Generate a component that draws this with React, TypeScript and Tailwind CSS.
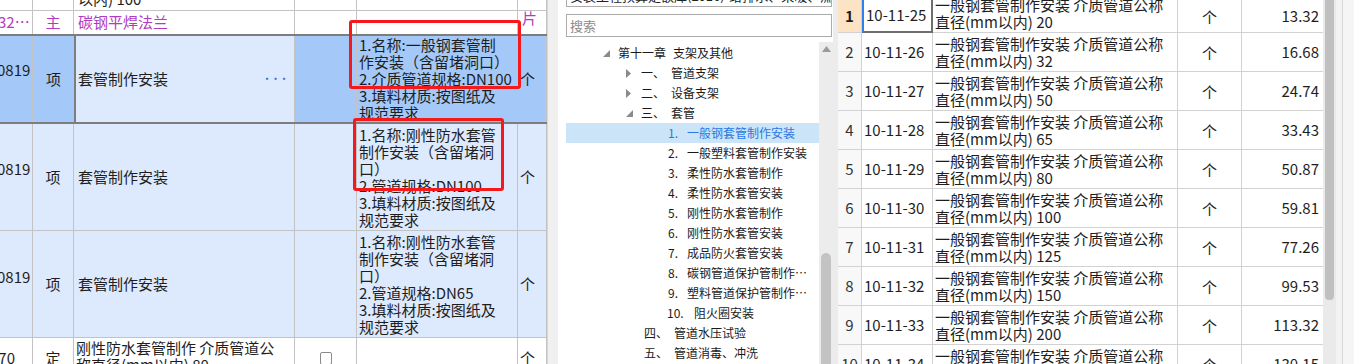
const cjk = "font-['Noto_Sans_CJK_SC',sans-serif]";

const c1 = "w-[33px] shrink-0 border-r border-[#c3c3c3] overflow-hidden";
const c2 = "w-[41px] shrink-0 border-r border-[#c3c3c3] flex items-center justify-center";
const c3 = "w-[221px] shrink-0 border-r border-[#c3c3c3] flex items-center pl-[4px] overflow-hidden";
const c4 = "w-[62px] shrink-0 border-r border-[#c3c3c3] flex items-center justify-center";
const c5 = "w-[161px] shrink-0 border-r border-[#c3c3c3] pl-[2px] pt-[2px] overflow-hidden";
const c6 = "w-[29px] shrink-0 border-r border-[#c3c3c3] flex items-center pl-[2px]";

function Lines({ items }: { items: string[] }) {
  return (
    <div className="leading-[17px] whitespace-nowrap">
      {items.map((t, i) => (
        <div key={i}>{t}</div>
      ))}
    </div>
  );
}

function LeftTable() {
  return (
    <div className="relative w-[547px] h-[364px] overflow-hidden bg-white text-[15px] text-[#1e1e1e]">
      {/* partial top row */}
      <div className="flex h-[11px] border-b border-[#c3c3c3]">
        <div className={c1} />
        <div className="w-[41px] shrink-0 border-r border-[#c3c3c3]" />
        <div className="w-[221px] shrink-0 border-r border-[#c3c3c3] overflow-hidden pl-[4px]">
          <div className="-mt-[10px] leading-[17px]">以内) 100</div>
        </div>
        <div className="w-[62px] shrink-0 border-r border-[#c3c3c3]" />
        <div className="w-[161px] shrink-0 border-r border-[#c3c3c3]" />
        <div className="w-[29px] shrink-0 border-r border-[#c3c3c3]" />
      </div>

      {/* 主材 row */}
      <div className="flex h-[23px] text-[#b03cbf]">
        <div className={c1 + " flex items-center"}>
          <span className="-ml-[2px] whitespace-nowrap">32…</span>
        </div>
        <div className={c2}>主</div>
        <div className={c3}>碳钢平焊法兰</div>
        <div className={c4} />
        <div className={c5} />
        <div className={c6 + " pl-[4px] !items-start"}>
          <span className="leading-[17px] mt-[-2px]">片</span>
        </div>
      </div>

      {/* selected row */}
      <div className="flex h-[90px] border-y-2 border-[#7d7d7d] bg-[#a4c9f8]">
        <div className={c1 + " flex items-center"}>
          <span className="-ml-[3px] -translate-y-[9px]">0819</span>
        </div>
        <div className="w-[41px] shrink-0 flex items-center justify-center">项</div>
        <div className="w-[221px] shrink-0 border-l-2 border-r border-l-[#7d7d7d] border-r-[#c3c3c3] bg-[#dde9fc] flex items-center justify-between pl-[2px] pr-[6px]">
          <span>套管制作安装</span>
          <span className="text-[#2f6fd0] text-[9px] tracking-[-0.5px] font-bold">···</span>
        </div>
        <div className={c4} />
        <div className={c5 + " !pt-0"}>
          <Lines items={["1.名称:一般钢套管制", "作安装（含留堵洞口）", "2.介质管道规格:DN100", "3.填料材质:按图纸及", "规范要求"]} />
        </div>
        <div className={c6}>个</div>
      </div>

      {/* row 4 */}
      <div className="flex h-[107px] border-b border-[#c3c3c3] bg-[#dde9fc]">
        <div className={c1 + " flex items-center"}>
          <span className="-ml-[3px] -translate-y-[8px]">0819</span>
        </div>
        <div className={c2}>项</div>
        <div className={c3}>套管制作安装</div>
        <div className={c4} />
        <div className={c5}>
          <Lines items={["1.名称:刚性防水套管", "制作安装（含留堵洞", "口）", "2.管道规格:DN100", "3.填料材质:按图纸及", "规范要求"]} />
        </div>
        <div className={c6}>个</div>
      </div>

      {/* row 5 */}
      <div className="flex h-[107px] border-b border-[#c3c3c3] bg-[#dde9fc]">
        <div className={c1 + " flex items-center"}>
          <span className="-ml-[3px] -translate-y-[7px]">0819</span>
        </div>
        <div className={c2}>项</div>
        <div className={c3}>套管制作安装</div>
        <div className={c4} />
        <div className={c5}>
          <Lines items={["1.名称:刚性防水套管", "制作安装（含留堵洞", "口）", "2.管道规格:DN65", "3.填料材质:按图纸及", "规范要求"]} />
        </div>
        <div className={c6}>个</div>
      </div>

      {/* row 6 */}
      <div className="flex h-[40px] bg-white">
        <div className={c1 + " flex items-center"}>
          <span className="-ml-[10px]">170</span>
        </div>
        <div className={c2}>定</div>
        <div className="w-[221px] shrink-0 border-r border-[#c3c3c3] pl-[2px] pt-[1px] overflow-hidden">
          <Lines items={["刚性防水套管制作 介质管道公", "称直径(mm以内) 80"]} />
        </div>
        <div className={c4 + " !items-start pt-[14px]"}>
          <div className="w-[12px] h-[13px] rounded-[2px] border border-[#8a8a8a] bg-white" />
        </div>
        <div className={c5} />
        <div className={c6 + " !items-start pt-[9px]"}>个</div>
      </div>

      {/* red highlight boxes */}
      <div className="absolute left-[349px] top-[20px] w-[172px] h-[69px] border-[3px] border-[#f5191c] rounded-[3px]" />
      <div className="absolute left-[353px] top-[118px] w-[151px] h-[73px] border-[3px] border-[#f5191c] rounded-[3px]" />
    </div>
  );
}

function TriDown() {
  return (
    <svg width="7" height="7" viewBox="0 0 7 7">
      <polygon points="7,0 7,7 0,7" fill="#8a8a8a" />
    </svg>
  );
}

function TriRight() {
  return (
    <svg width="5" height="9" viewBox="0 0 5 9">
      <polygon points="0,0 5,4.5 0,9" fill="#8a8a8a" />
    </svg>
  );
}

type Node = { indent: number; tri?: "down" | "right"; pre: string; preW: number; label: string; sel?: boolean };

const nodes: Node[] = [
  { indent: 34, tri: "down", pre: "第十一章", preW: 55, label: "支架及其他" },
  { indent: 57, tri: "right", pre: "一、", preW: 30, label: "管道支架" },
  { indent: 57, tri: "right", pre: "二、", preW: 30, label: "设备支架" },
  { indent: 57, tri: "down", pre: "三、", preW: 30, label: "套管" },
  { indent: 102, pre: "1.", preW: 19, label: "一般钢套管制作安装", sel: true },
  { indent: 102, pre: "2.", preW: 19, label: "一般塑料套管制作安装" },
  { indent: 102, pre: "3.", preW: 19, label: "柔性防水套管制作" },
  { indent: 102, pre: "4.", preW: 19, label: "柔性防水套管安装" },
  { indent: 102, pre: "5.", preW: 19, label: "刚性防水套管制作" },
  { indent: 102, pre: "6.", preW: 19, label: "刚性防水套管安装" },
  { indent: 102, pre: "7.", preW: 19, label: "成品防火套管安装" },
  { indent: 102, pre: "8.", preW: 19, label: "碳钢管道保护管制作…" },
  { indent: 102, pre: "9.", preW: 19, label: "塑料管道保护管制作…" },
  { indent: 101, pre: "10.", preW: 27, label: "阻火圈安装" },
  { indent: 78, pre: "四、", preW: 30, label: "管道水压试验" },
  { indent: 78, pre: "五、", preW: 30, label: "管道消毒、冲洗" },
];

function TreePanel() {
  return (
    <div className="w-[275px] h-[364px] bg-white flex flex-col pl-[8px] overflow-hidden text-[12px]">
      <div className="h-[7px] overflow-hidden border border-t-0 border-[#ababab] mr-[1px]">
        <div className="-mt-[12px] pl-[3px] leading-[16px] text-[13px] whitespace-nowrap text-[#222]">
          安装工程预算定额库(2016)-给排水、采暖、燃气工程
        </div>
      </div>
      <div className="mt-[7px] h-[23px] border border-[#ababab] mr-[1px] flex items-center pl-[3px] text-[13px] text-[#8c8c8c]">
        搜索
      </div>
      <div className="mt-[5px] flex flex-1 min-h-0">
        <div className="w-[253px] pt-[1px]">
          {nodes.map((n, i) => (
            <div
              key={i}
              className={
                "h-[20px] flex items-center whitespace-nowrap " +
                (n.sel ? "bg-[#cce4f8] text-[#2a78e0]" : "text-[#1a1a1a]")
              }
            >
              <div className="shrink-0" style={{ width: n.tri ? n.indent + 3 : n.indent }} />
              {n.tri && (
                <div className="w-[15px] shrink-0 flex items-center">
                  {n.tri === "down" ? <TriDown /> : <TriRight />}
                </div>
              )}
              <span className="shrink-0" style={{ width: n.preW }}>
                {n.pre}
              </span>
              <span>{n.label}</span>
            </div>
          ))}
        </div>
        <div className="w-[14px] bg-[#ececec] flex flex-col items-center">
          <svg width="9" height="6" viewBox="0 0 9 6" className="mt-[4px]">
            <polygon points="0,6 4.5,0 9,6" fill="#9a9a9a" />
          </svg>
          <div className="mt-[201px] w-[10px] flex-1 rounded-t-[5px] bg-[#c3c3c3]" />
        </div>
      </div>
    </div>
  );
}

const rows = [
  ["10-11-25", "20", "13.32"],
  ["10-11-26", "32", "16.68"],
  ["10-11-27", "50", "24.74"],
  ["10-11-28", "65", "33.43"],
  ["10-11-29", "80", "50.87"],
  ["10-11-30", "100", "59.81"],
  ["10-11-31", "125", "77.26"],
  ["10-11-32", "150", "99.53"],
  ["10-11-33", "200", "113.32"],
  ["10-11-34", "250", "130.15"],
];

function QuotaTable() {
  return (
    <div className="flex h-[364px] overflow-hidden">
      <div className="w-[485px] bg-white text-[15px] text-[#1e1e1e]">
        <div className="-mt-[6px]">
          {rows.map((r, i) => {
            const first = i === 0;
            return (
              <div key={i} className="flex h-[39px] border-b border-[#d2d2d2]">
                <div
                  className={
                    "w-[24px] shrink-0 border-r border-[#d2d2d2] flex items-center justify-center " +
                    (first ? "bg-[#fce3c3] font-bold pt-[6px]" : "bg-[#f8f8f8] text-[#333]")
                  }
                >
                  {i + 1}
                </div>
                <div
                  className={
                    "w-[71px] shrink-0 flex items-center pl-[2px] " +
                    (first
                      ? "border-l-2 border-l-[#2f7fef] border-r-2 border-r-[#6e6e6e] border-b-2 border-b-[#6e6e6e] -mb-[1px] pt-[6px]"
                      : "border-r border-[#d2d2d2]")
                  }
                >
                  {r[0]}
                </div>
                <div className="w-[245px] shrink-0 border-r border-[#d2d2d2] flex items-center pl-[2px] overflow-hidden">
                  <div className="leading-[17px] whitespace-nowrap">
                    <div>一般钢套管制作安装 介质管道公称</div>
                    <div>直径(mm以内) {r[1]}</div>
                  </div>
                </div>
                <div className={"w-[64px] shrink-0 border-r border-[#d2d2d2] flex items-center justify-center pt-[2px]" + (first ? " pt-[8px]" : "")}>
                  个
                </div>
                <div className={"w-[81px] shrink-0 flex items-center justify-end pr-[4px]" + (first ? " pt-[6px]" : "")}>{r[2]}</div>
              </div>
            );
          })}
        </div>
      </div>
      <div className="w-[13px] bg-[#eaeaea] flex justify-center">
        <div className="w-[9px] h-[300px] rounded-b-[4px] bg-[#c0c0c0]" />
      </div>
      <div className="w-[7px] bg-[#f3f3f3] border-r border-[#d8d8d8]" />
      <div className="w-[11px] bg-[#f5f5f5]" />
    </div>
  );
}

export default function App() {
  return (
    <div className={"w-[1354px] h-[364px] overflow-hidden flex bg-[#eeeeee] " + cjk}>
      <LeftTable />
      <div className="w-[11px] shrink-0 bg-[#f0f0f0] border-l border-[#d6d6d6]" />
      <TreePanel />
      <div className="w-[5px] shrink-0 bg-[#ececec]" />
      <QuotaTable />
    </div>
  );
}
